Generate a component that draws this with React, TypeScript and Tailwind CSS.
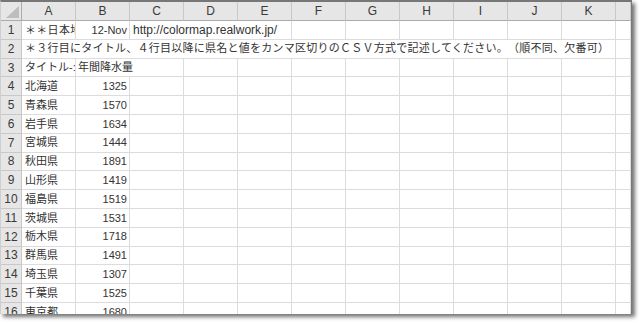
import React from 'react';

const cols = ['A', 'B', 'C', 'D', 'E', 'F', 'G', 'H', 'I', 'J', 'K', ''];

const prefs: [string, number][] = [
    ['北海道', 1325],
    ['青森県', 1570],
    ['岩手県', 1634],
    ['宮城県', 1444],
    ['秋田県', 1891],
    ['山形県', 1419],
    ['福島県', 1519],
    ['茨城県', 1531],
    ['栃木県', 1718],
    ['群馬県', 1491],
    ['埼玉県', 1307],
    ['千葉県', 1525],
    ['東京都', 1680],
];

const jp = "font-['Liberation_Sans','Noto_Sans_CJK_JP',sans-serif]";
const cell = 'border-r border-b border-[#dcdcdc] overflow-hidden whitespace-nowrap flex items-center text-[11px] text-[#333] [text-spacing-trim:space-all]';
const rowHead = 'bg-[#e6e6e6] border-r border-b border-[#c8c8c8] flex items-center justify-center text-[12px] text-[#3a3a3a]';

function Empty({ n }: { n: number }) {
    return (
        <>
            {Array.from({ length: n }).map((_, i) => (
                <div key={i} className={cell} />
            ))}
        </>
    );
}

export default function App() {
    return (
        <div className={`w-[640px] h-[323px] bg-white ${jp}`}>
            <div className="w-[632px] h-[314px] overflow-hidden border-t-2 border-l border-r border-[#777] border-l-[#cfcfcf] shadow-[3px_3px_4px_rgba(0,0,0,0.55)] bg-white">
                <div className="grid grid-cols-[21px_repeat(11,54px)_1fr] grid-rows-[19px_repeat(16,18.8px)]">
                    {/* header */}
                    <div className="bg-[#e6e6e6] border-r border-b border-[#ababab] flex items-end justify-end p-[2px]">
                        <svg width="13" height="12" viewBox="0 0 13 12">
                            <polygon points="13,0 13,12 0,12" fill="#bdbdbd" />
                        </svg>
                    </div>
                    {cols.map((c, i) => (
                        <div key={i} className="bg-[#e6e6e6] border-r border-b border-[#c8c8c8] border-b-[#ababab] flex items-center justify-center text-[12px] text-[#3a3a3a]">
                            {c}
                        </div>
                    ))}

                    {/* row 1 */}
                    <div className={rowHead}>1</div>
                    <div className={`${cell} pl-[3px] tracking-[0.3px]`}>＊＊日本地図</div>
                    <div className={`${cell} justify-end pr-[2px]`}>12-Nov</div>
                    <div className={`${cell} col-span-3 pl-[3px] text-[12px]`}>http://colormap.realwork.jp/</div>
                    <Empty n={7} />

                    {/* row 2 */}
                    <div className={rowHead}>2</div>
                    <div className={`${cell} col-span-11 pl-[3px] tracking-[0.25px]`}>
                        ＊３行目にタイトル、４行目以降に県名と値をカンマ区切りのＣＳＶ方式で記述してください。（順不同、欠番可）
                    </div>
                    <Empty n={1} />

                    {/* row 3 */}
                    <div className={rowHead}>3</div>
                    <div className={`${cell} pl-[3px]`}>タイトル-:</div>
                    <div className={`${cell} col-span-2 pl-[2px]`}>年間降水量</div>
                    <Empty n={9} />

                    {prefs.map(([name, v], i) => (
                        <React.Fragment key={name}>
                            <div className={rowHead}>{i + 4}</div>
                            <div className={`${cell} pl-[3px]`}>{name}</div>
                            <div className={`${cell} justify-end pr-[2px]`}>{v}</div>
                            <Empty n={10} />
                        </React.Fragment>
                    ))}
                </div>
            </div>
        </div>
    );
}
